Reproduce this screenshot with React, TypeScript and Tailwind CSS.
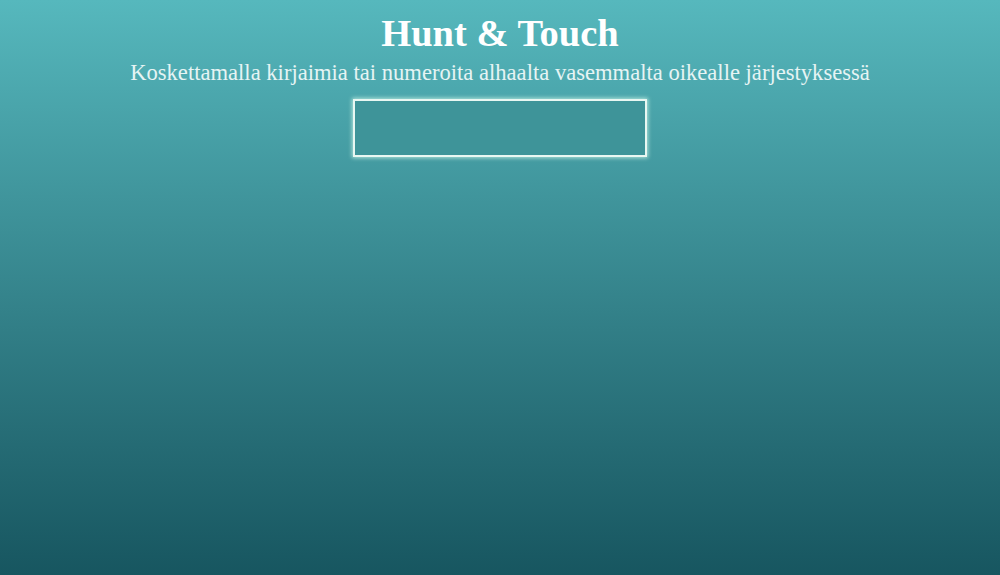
import React from "react";

export default function App() {
  return (
    <div className="w-[1000px] h-[575px] bg-gradient-to-b from-[#56b8bd] to-[#175660] flex flex-col items-center [font-family:'Liberation_Serif',serif] text-white">
      <h1 className="mt-[11px] text-[38.5px] leading-[44px] font-bold">Hunt &amp; Touch</h1>
      <p className="mt-[3px] text-[22.6px] leading-[30px] text-[#e6f4f4]">
        Koskettamalla kirjaimia tai numeroita alhaalta vasemmalta oikealle järjestyksessä
      </p>
      <div className="mt-[11px] w-[294px] h-[58px] bg-[#3e9499] border-2 border-[#e8f7f2] shadow-[0_0_4px_1px_rgba(220,255,240,0.7)]" />
    </div>
  );
}
